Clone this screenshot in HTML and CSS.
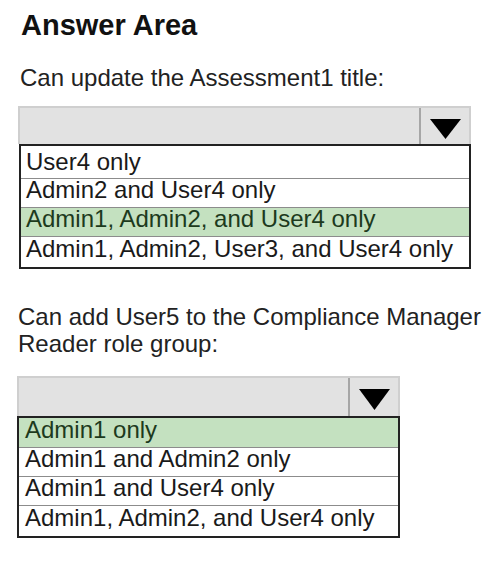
FILE: index.html
```html
<!DOCTYPE html>
<html lang="en">
<head>
<meta charset="utf-8">
<title>Answer Area</title>
<link rel="stylesheet" href="styles.css">
</head>
<body>
<main class="area">
  <h1 class="title">Answer Area</h1>

  <p class="label label-first">Can update the Assessment1 title:</p>
  <div class="select select-wide">
    <div class="select-box">
      <span class="select-value"></span>
      <span class="select-arrow">
        <svg width="31" height="20" viewBox="0 0 31 20"><polygon points="0,0 31,0 15.5,20" fill="#000"/></svg>
      </span>
    </div>
    <ul class="options">
      <li class="option option-tall">User4 only</li>
      <li class="option">Admin2 and User4 only</li>
      <li class="option option-selected">Admin1, Admin2, and User4 only</li>
      <li class="option option-last">Admin1, Admin2, User3, and User4 only</li>
    </ul>
  </div>

  <p class="label label-second">Can add User5 to the Compliance Manager Reader role group:</p>
  <div class="select select-narrow">
    <div class="select-box select-box-tall">
      <span class="select-value"></span>
      <span class="select-arrow">
        <svg width="31" height="21" viewBox="0 0 31 21"><polygon points="0,0 31,0 15.5,21" fill="#000"/></svg>
      </span>
    </div>
    <ul class="options">
      <li class="option option-selected option-first">Admin1 only</li>
      <li class="option">Admin1 and Admin2 only</li>
      <li class="option">Admin1 and User4 only</li>
      <li class="option option-last">Admin1, Admin2, and User4 only</li>
    </ul>
  </div>
</main>
</body>
</html>
```

FILE: styles.css
```css
* {
  box-sizing: border-box;
}

html, body {
  margin: 0;
  padding: 0;
  background: #ffffff;
}

body {
  font-family: "Liberation Sans", Arial, sans-serif;
  color: #1c1c1c;
}

.area {
  padding: 9px 10px 0 18px;
}

.title {
  margin: 0 0 0 3px;
  font-size: 29px;
  line-height: 32px;
  font-weight: bold;
  color: #111111;
}

.label {
  margin: 0 0 0 2px;
  font-size: 24px;
  line-height: 27px;
  color: #222222;
}

.label-first {
  margin-top: 23px;
  margin-bottom: 15px;
}

.label-second {
  margin-top: 34px;
  margin-bottom: 19px;
  margin-left: 0;
}

.select-wide {
  width: 453px;
}

.select-narrow {
  width: 383px;
  margin-left: -1px;
}

.select-box {
  display: flex;
  height: 38px;
  background: #e2e2e2;
  border: 2px solid #cfcfcf;
  border-bottom: none;
}

.select-box-tall {
  height: 40px;
}

.select-value {
  flex: 1;
}

.select-arrow {
  width: 50px;
  border-left: 2px solid #a6a6a6;
  display: flex;
  align-items: center;
  justify-content: center;
  padding-top: 6px;
}

.select-box-tall .select-arrow {
  padding-top: 4px;
}

.options {
  list-style: none;
  margin: 0;
  padding: 0;
  border: 2px solid #222222;
  background: #ffffff;
}

.select-wide .options {
  margin-left: 1px;
}

.option {
  font-size: 24px;
  line-height: 22px;
  padding: 0 4px 6px 5px;
  border-top: 1px solid #8c8c8c;
  color: #1a1a1a;
  white-space: nowrap;
}

.option:first-child {
  border-top: none;
}

.option-tall {
  padding-top: 5px;
  padding-bottom: 5px;
}

.option-first {
  padding-top: 1px;
}

.option-last {
  padding-top: 1px;
  padding-bottom: 7px;
}

.select-narrow .option {
  padding-left: 6px;
}

.option-selected {
  background: #c4e1c0;
  color: #1d3a1d;
}
```
